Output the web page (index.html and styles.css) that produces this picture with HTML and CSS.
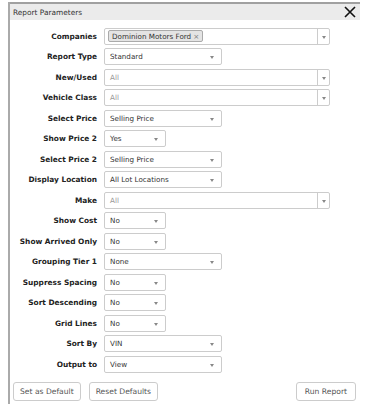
FILE: index.html
```html
<!DOCTYPE html>
<html lang="en">
<head>
  <meta charset="UTF-8">
  <meta name="viewport" content="width=device-width, initial-scale=1.0">
  <title>Report Parameters</title>
  <link rel="stylesheet" href="styles.css">
</head>
<body>
  <div class="dialog">
    <div class="dialog-header">
      <span class="dialog-title">Report Parameters</span>
      <svg class="close" width="12" height="12" viewBox="0 0 12 12">
        <path d="M1 1 L11 11 M11 1 L1 11" stroke="#111" stroke-width="1.6" fill="none"/>
      </svg>
    </div>
    <div class="form">
      <div class="row">
        <label>Companies</label>
        <div class="select wide multi">
          <span class="tag">Dominion Motors Ford <span class="tag-x">&times;</span></span>
          <span class="arrow-box"><span class="arrow"></span></span>
        </div>
      </div>
      <div class="row">
        <label>Report Type</label>
        <div class="select medium"><span class="value">Standard</span><span class="arrow"></span></div>
      </div>
      <div class="row">
        <label>New/Used</label>
        <div class="select wide"><span class="value placeholder">All</span><span class="arrow-box"><span class="arrow"></span></span></div>
      </div>
      <div class="row">
        <label>Vehicle Class</label>
        <div class="select wide"><span class="value placeholder">All</span><span class="arrow-box"><span class="arrow"></span></span></div>
      </div>
      <div class="row">
        <label>Select Price</label>
        <div class="select medium"><span class="value">Selling Price</span><span class="arrow"></span></div>
      </div>
      <div class="row">
        <label>Show Price 2</label>
        <div class="select small"><span class="value">Yes</span><span class="arrow"></span></div>
      </div>
      <div class="row">
        <label>Select Price 2</label>
        <div class="select medium"><span class="value">Selling Price</span><span class="arrow"></span></div>
      </div>
      <div class="row">
        <label>Display Location</label>
        <div class="select medium"><span class="value">All Lot Locations</span><span class="arrow"></span></div>
      </div>
      <div class="row">
        <label>Make</label>
        <div class="select wide"><span class="value placeholder">All</span><span class="arrow-box"><span class="arrow"></span></span></div>
      </div>
      <div class="row">
        <label>Show Cost</label>
        <div class="select small"><span class="value">No</span><span class="arrow"></span></div>
      </div>
      <div class="row">
        <label>Show Arrived Only</label>
        <div class="select small"><span class="value">No</span><span class="arrow"></span></div>
      </div>
      <div class="row">
        <label>Grouping Tier 1</label>
        <div class="select medium"><span class="value">None</span><span class="arrow"></span></div>
      </div>
      <div class="row">
        <label>Suppress Spacing</label>
        <div class="select small"><span class="value">No</span><span class="arrow"></span></div>
      </div>
      <div class="row">
        <label>Sort Descending</label>
        <div class="select small"><span class="value">No</span><span class="arrow"></span></div>
      </div>
      <div class="row">
        <label>Grid Lines</label>
        <div class="select small"><span class="value">No</span><span class="arrow"></span></div>
      </div>
      <div class="row">
        <label>Sort By</label>
        <div class="select medium"><span class="value">VIN</span><span class="arrow"></span></div>
      </div>
      <div class="row">
        <label>Output to</label>
        <div class="select medium"><span class="value">View</span><span class="arrow"></span></div>
      </div>
    </div>
    <div class="actions">
      <button class="btn">Set as Default</button>
      <button class="btn">Reset Defaults</button>
      <button class="btn run">Run Report</button>
    </div>
  </div>
</body>
</html>
```

FILE: styles.css
```css
body {
  margin: 0;
  font-family: "DejaVu Sans", Verdana, sans-serif;
  background-color: #fff;
  color: #333;
}
.dialog {
  margin: 2px 0 0 8px;
  width: 350px;
  height: 402px;
  border-left: 2px solid #aaa;
}
.dialog-header {
  height: 16px;
  border-top: 2px solid #a0a0a0;
  background-color: #ebebeb;
  display: flex;
  align-items: center;
  justify-content: space-between;
  padding: 0 4px 0 3px;
}
.dialog-title {
  font-size: 7.4px;
  color: #333;
}
.close {
  display: block;
}
.form {
  padding-top: 6px;
}
.row {
  display: grid;
  grid-template-columns: 87px 1fr;
  column-gap: 7px;
  height: 20.5px;
  align-items: center;
}
.row label {
  text-align: right;
  font-weight: bold;
  font-size: 7.4px;
  color: #222;
}
.select {
  position: relative;
  height: 17px;
  box-sizing: border-box;
  border: 1px solid #ccc;
  border-radius: 2px;
  display: flex;
  align-items: center;
  font-size: 7.2px;
  color: #333;
  background: #fff;
}
.small { width: 62px; }
.medium { width: 118px; }
.wide { width: 226px; }
.value {
  padding-left: 5px;
}
.placeholder {
  color: #999;
}
.arrow {
  position: absolute;
  right: 7px;
  top: 7px;
  width: 0;
  height: 0;
  border-left: 2.5px solid transparent;
  border-right: 2.5px solid transparent;
  border-top: 3px solid #888;
}
.arrow-box {
  position: absolute;
  right: 0;
  top: 0;
  bottom: 0;
  width: 11px;
  border-left: 1px solid #ccc;
}
.arrow-box .arrow {
  right: 3px;
}
.tag {
  margin-left: 3px;
  height: 12px;
  box-sizing: border-box;
  padding: 0 3px;
  border: 1px solid #aaa;
  border-radius: 2px;
  background: #e4e4e4;
  display: flex;
  align-items: center;
  gap: 2px;
}
.tag-x {
  color: #888;
}
.actions {
  display: flex;
  gap: 8px;
  padding: 7px 4px 0 3px;
}
.btn {
  height: 19px;
  padding: 0 6px;
  border: 1px solid #ccc;
  border-radius: 3px;
  background: #fff;
  font-family: "DejaVu Sans", Verdana, sans-serif;
  font-size: 7.6px;
  color: #555;
}
.run {
  margin-left: auto;
  padding: 0 8px;
}
```
